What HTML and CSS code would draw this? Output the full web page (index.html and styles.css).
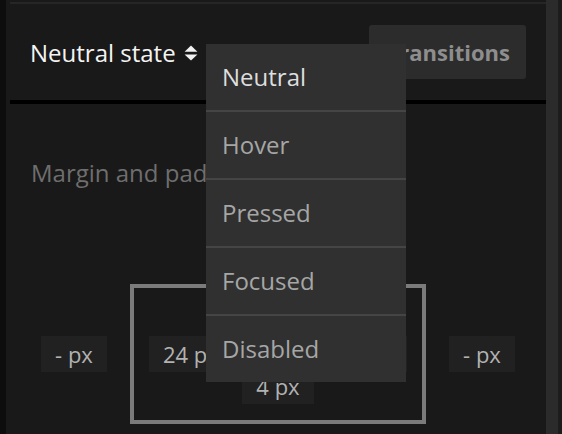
FILE: index.html
```html
<!DOCTYPE html>
<html>
<head>
<meta charset="utf-8">
<link rel="stylesheet" href="styles.css">
</head>
<body>
<div class="app">
  <div class="rail"></div>
  <div class="panel">
    <div class="topline"></div>
    <header class="head">
      <div class="state">Neutral state
        <svg class="updown" width="14" height="16" viewBox="0 0 14 16">
          <path d="M7 0.6 L13.4 6.8 H0.6 Z" fill="#f2f2f2"/>
          <path d="M0.6 9.4 H13.4 L7 15.6 Z" fill="#f2f2f2"/>
        </svg>
      </div>
      <button class="trans">Transitions</button>
    </header>
    <div class="divider"></div>
    <section class="content">
      <p class="label">Margin and padding</p>
      <div class="spacing">
        <span class="pill m-top">- px</span>
        <span class="pill m-left">- px</span>
        <div class="box">
          <span class="pill p-top">4 px</span>
          <span class="pill p-left">24 px</span>
          <span class="pill p-right">24 px</span>
          <span class="pill p-bottom">4 px</span>
        </div>
        <span class="pill m-right">- px</span>
      </div>
    </section>
    <ul class="menu">
      <li class="item active">Neutral</li>
      <li class="item">Hover</li>
      <li class="item">Pressed</li>
      <li class="item">Focused</li>
      <li class="item">Disabled</li>
    </ul>
  </div>
  <div class="scroll"></div>
</div>
</body>
</html>
```
FILE: styles.css
```css
* { box-sizing: border-box; }
html, body { margin: 0; padding: 0; }
body {
  background: #1c1c1c;
  font-family: "Open Sans", "Noto Sans", sans-serif;
  width: 562px;
  height: 434px;
  overflow: hidden;
}
.app {
  display: flex;
  height: 434px;
}
.rail {
  width: 6px;
  flex: none;
  background: #0d0d0d;
}
.panel {
  position: relative;
  width: 540px;
  flex: none;
  background: #191919;
  padding: 2px 0 0 4px;
  overflow: hidden;
}
.topline {
  height: 2px;
  background: #262626;
}
.head {
  height: 96px;
  display: flex;
  align-items: center;
  justify-content: space-between;
  padding: 0 20px 0 20px;
}
.state {
  display: flex;
  align-items: center;
  gap: 8px;
  color: #f4f4f4;
  font-size: 24px;
  line-height: 32px;
  padding-top: 2px;
}
.updown { display: block; }
.trans {
  height: 54px;
  padding: 0 16px 0 18px;
  border: none;
  border-radius: 3px;
  background: #2c2c2c;
  color: #8e8e8e;
  font-family: "Open Sans", sans-serif;
  font-weight: 700;
  font-size: 22px;
}
.divider {
  height: 4px;
  background: #000;
}
.content {
  padding-top: 53px;
}
.label {
  margin: 0 0 0 21px;
  font-size: 24px;
  line-height: 32px;
  color: #6e6e6e;
}
.spacing {
  margin-top: 36px;
  display: grid;
  grid-template-columns: 66px 296px 66px;
  grid-template-rows: 36px auto 36px;
  gap: 23px;
  justify-content: center;
  align-items: center;
  justify-items: center;
}
.pill {
  display: inline-block;
  height: 36px;
  padding: 0 14px;
  background: #212121;
  color: #b2b2b2;
  font-size: 22px;
  line-height: 36px;
  white-space: nowrap;
}
.m-top { grid-column: 2; grid-row: 1; }
.m-left { grid-column: 1; grid-row: 2; }
.m-right { grid-column: 3; grid-row: 2; }
.box {
  grid-column: 2;
  grid-row: 2;
  width: 296px;
  height: 140px;
  border: 4px solid #7b7b7b;
  padding: 16px 15px;
  display: grid;
}
.box .pill { grid-area: 1 / 1; }
.p-top { justify-self: center; align-self: start; }
.p-bottom { justify-self: center; align-self: end; }
.p-left { justify-self: start; align-self: center; }
.p-right { justify-self: end; align-self: center; }
.menu {
  position: absolute;
  left: 200px;
  top: 44px;
  width: 200px;
  margin: 0;
  padding: 0;
  list-style: none;
  background: #303030;
}
.item {
  height: 66px;
  line-height: 66px;
  padding-left: 16px;
  font-size: 24px;
  color: #a6a6a6;
}
.item + .item {
  height: 68px;
  border-top: 2px solid #454545;
}
.item.active { color: #dedede; }
.scroll {
  width: 12px;
  flex: none;
  background: #2b2b2b;
}
```
